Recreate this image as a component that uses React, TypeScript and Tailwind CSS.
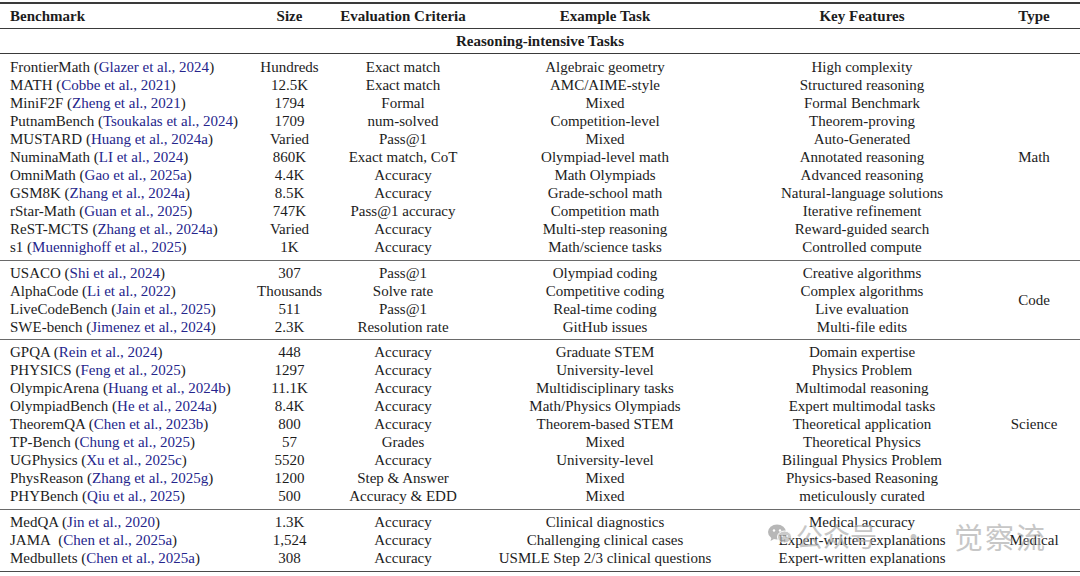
import React from 'react';

type Row = {
  name: string;
  cite: string;
  size: string;
  criteria: string;
  task: string;
  features: string;
};

type Section = {
  type: string;
  rows: Row[];
};

const sections: Section[] = [
  {
    type: 'Math',
    rows: [
      { name: 'FrontierMath', cite: 'Glazer et al., 2024', size: 'Hundreds', criteria: 'Exact match', task: 'Algebraic geometry', features: 'High complexity' },
      { name: 'MATH', cite: 'Cobbe et al., 2021', size: '12.5K', criteria: 'Exact match', task: 'AMC/AIME-style', features: 'Structured reasoning' },
      { name: 'MiniF2F', cite: 'Zheng et al., 2021', size: '1794', criteria: 'Formal', task: 'Mixed', features: 'Formal Benchmark' },
      { name: 'PutnamBench', cite: 'Tsoukalas et al., 2024', size: '1709', criteria: 'num-solved', task: 'Competition-level', features: 'Theorem-proving' },
      { name: 'MUSTARD', cite: 'Huang et al., 2024a', size: 'Varied', criteria: 'Pass@1', task: 'Mixed', features: 'Auto-Generated' },
      { name: 'NuminaMath', cite: 'LI et al., 2024', size: '860K', criteria: 'Exact match, CoT', task: 'Olympiad-level math', features: 'Annotated reasoning' },
      { name: 'OmniMath', cite: 'Gao et al., 2025a', size: '4.4K', criteria: 'Accuracy', task: 'Math Olympiads', features: 'Advanced reasoning' },
      { name: 'GSM8K', cite: 'Zhang et al., 2024a', size: '8.5K', criteria: 'Accuracy', task: 'Grade-school math', features: 'Natural-language solutions' },
      { name: 'rStar-Math', cite: 'Guan et al., 2025', size: '747K', criteria: 'Pass@1 accuracy', task: 'Competition math', features: 'Iterative refinement' },
      { name: 'ReST-MCTS', cite: 'Zhang et al., 2024a', size: 'Varied', criteria: 'Accuracy', task: 'Multi-step reasoning', features: 'Reward-guided search' },
      { name: 's1', cite: 'Muennighoff et al., 2025', size: '1K', criteria: 'Accuracy', task: 'Math/science tasks', features: 'Controlled compute' },
    ],
  },
  {
    type: 'Code',
    rows: [
      { name: 'USACO', cite: 'Shi et al., 2024', size: '307', criteria: 'Pass@1', task: 'Olympiad coding', features: 'Creative algorithms' },
      { name: 'AlphaCode', cite: 'Li et al., 2022', size: 'Thousands', criteria: 'Solve rate', task: 'Competitive coding', features: 'Complex algorithms' },
      { name: 'LiveCodeBench', cite: 'Jain et al., 2025', size: '511', criteria: 'Pass@1', task: 'Real-time coding', features: 'Live evaluation' },
      { name: 'SWE-bench', cite: 'Jimenez et al., 2024', size: '2.3K', criteria: 'Resolution rate', task: 'GitHub issues', features: 'Multi-file edits' },
    ],
  },
  {
    type: 'Science',
    rows: [
      { name: 'GPQA', cite: 'Rein et al., 2024', size: '448', criteria: 'Accuracy', task: 'Graduate STEM', features: 'Domain expertise' },
      { name: 'PHYSICS', cite: 'Feng et al., 2025', size: '1297', criteria: 'Accuracy', task: 'University-level', features: 'Physics Problem' },
      { name: 'OlympicArena', cite: 'Huang et al., 2024b', size: '11.1K', criteria: 'Accuracy', task: 'Multidisciplinary tasks', features: 'Multimodal reasoning' },
      { name: 'OlympiadBench', cite: 'He et al., 2024a', size: '8.4K', criteria: 'Accuracy', task: 'Math/Physics Olympiads', features: 'Expert multimodal tasks' },
      { name: 'TheoremQA', cite: 'Chen et al., 2023b', size: '800', criteria: 'Accuracy', task: 'Theorem-based STEM', features: 'Theoretical application' },
      { name: 'TP-Bench', cite: 'Chung et al., 2025', size: '57', criteria: 'Grades', task: 'Mixed', features: 'Theoretical Physics' },
      { name: 'UGPhysics', cite: 'Xu et al., 2025c', size: '5520', criteria: 'Accuracy', task: 'University-level', features: 'Bilingual Physics Problem' },
      { name: 'PhysReason', cite: 'Zhang et al., 2025g', size: '1200', criteria: 'Step & Answer', task: 'Mixed', features: 'Physics-based Reasoning' },
      { name: 'PHYBench', cite: 'Qiu et al., 2025', size: '500', criteria: 'Accuracy & EDD', task: 'Mixed', features: 'meticulously curated' },
    ],
  },
  {
    type: 'Medical',
    rows: [
      { name: 'MedQA', cite: 'Jin et al., 2020', size: '1.3K', criteria: 'Accuracy', task: 'Clinical diagnostics', features: 'Medical accuracy' },
      { name: 'JAMA\u00a0', cite: 'Chen et al., 2025a', size: '1,524', criteria: 'Accuracy', task: 'Challenging clinical cases', features: 'Expert-written explanations' },
      { name: 'Medbullets', cite: 'Chen et al., 2025a', size: '308', criteria: 'Accuracy', task: 'USMLE Step 2/3 clinical questions', features: 'Expert-written explanations' },
    ],
  },
];

const cols = 'grid grid-cols-[240px_99px_128px_276px_238px]';

// small "WeChat" bubble mark used by the watermark
function WeChatMark() {
  return (
    <svg width="24" height="22" viewBox="0 0 24 22">
      <ellipse cx="9" cy="9" rx="9" ry="7.5" fill="#9a9a9a" />
      <path d="M3.5 14.5 L2.5 18 L6.5 15.8 Z" fill="#9a9a9a" />
      <circle cx="6" cy="7.5" r="1.2" fill="#fff" />
      <circle cx="12" cy="7.5" r="1.2" fill="#fff" />
      <ellipse cx="16.5" cy="14" rx="7" ry="6" fill="#b4b4b4" stroke="#fff" strokeWidth="1" />
      <circle cx="14" cy="13" r="0.9" fill="#fff" />
      <circle cx="19" cy="13" r="0.9" fill="#fff" />
    </svg>
  );
}

export default function App() {
  return (
    <div className="relative w-[1080px] h-[576px] overflow-hidden bg-white text-[15px] leading-[18px] text-[#1c1c1c] font-['Liberation_Serif','Times_New_Roman',serif]">
      <div className="mt-[2px] border-t-2 border-[#3a3a3a]">
        {/* header */}
        <div className="flex h-[25px] items-center border-b border-[#3a3a3a] font-bold">
          <div className={cols}>
            <div className="pl-[10px]">Benchmark</div>
            <div className="text-center">Size</div>
            <div className="text-center">Evaluation Criteria</div>
            <div className="text-center">Example Task</div>
            <div className="text-center">Key Features</div>
          </div>
          <div className="w-[99px] pl-[7px] text-center">Type</div>
        </div>
        <div className="flex h-[25px] items-center justify-center border-b border-[#3a3a3a] font-bold">
          Reasoning-intensive Tasks
        </div>

        {sections.map((section, si) => (
          <div
            key={section.type}
            className={`flex ${si === 0 ? 'pt-[4px] pb-[4px]' : si === 2 ? 'pt-[3px] pb-[4px]' : 'pt-[3px] pb-[3px]'} ${si > 0 ? 'border-t-[1.5px] border-[#6a6a6a]' : ''} ${si === sections.length - 1 ? 'border-b-[1.5px] border-b-[#4a4a4a] pb-[4px]' : ''}`}
          >
            <div className={cols}>
              {section.rows.map((r) => (
                <React.Fragment key={r.name + r.cite}>
                  <div className="pl-[10px] whitespace-nowrap">
                    {r.name} (<span className="text-[#25258c]">{r.cite}</span>)
                  </div>
                  <div className="text-center">{r.size}</div>
                  <div className="text-center whitespace-nowrap">{r.criteria}</div>
                  <div className="text-center whitespace-nowrap">{r.task}</div>
                  <div className="text-center whitespace-nowrap">{r.features}</div>
                </React.Fragment>
              ))}
            </div>
            <div className="flex w-[99px] items-center justify-center pl-[7px]">{section.type}</div>
          </div>
        ))}
      </div>

      {/* watermark */}
      <div className="pointer-events-none absolute left-[768px] top-[518px] h-[40px] w-[300px] opacity-70 font-['Noto_Sans_CJK_SC',sans-serif] text-[#b0b0b0]">
        <div className="absolute left-0 top-[5px]">
          <WeChatMark />
        </div>
        <span className="absolute left-[28px] top-0 text-[27px] leading-[36px]">公众号</span>
        <span className="absolute left-[132px] top-0 text-[27px] leading-[36px]">·</span>
        <span className="absolute left-[186px] top-0 text-[29px] leading-[36px] tracking-[2px]">觉察流</span>
      </div>
    </div>
  );
}
